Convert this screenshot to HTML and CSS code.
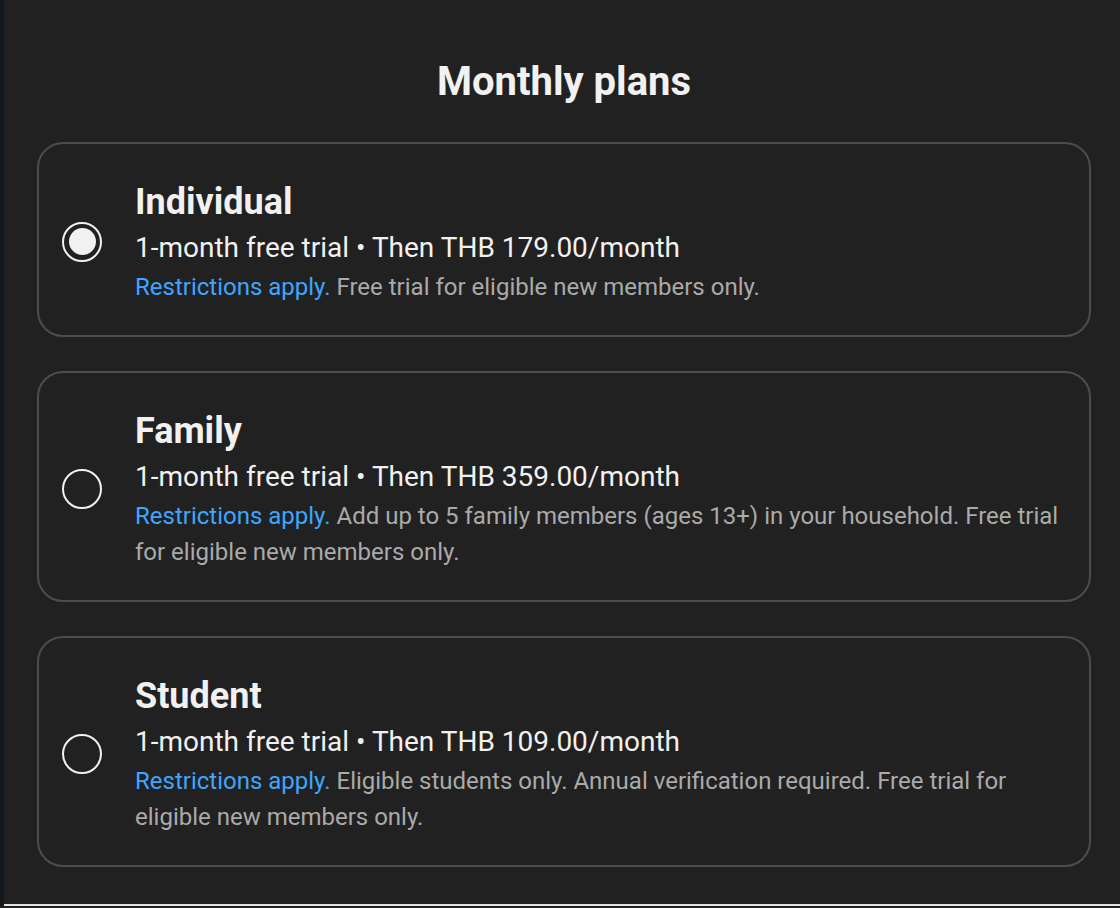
FILE: index.html
```html
<!DOCTYPE html>
<html lang="en">
<head>
<meta charset="utf-8">
<title>Monthly plans</title>
<link rel="stylesheet" href="styles.css">
</head>
<body>
<div class="page">
  <div class="edge"></div>
  <main class="content">
    <h1 class="title">Monthly plans</h1>
    <div class="plans">
      <label class="plan">
        <span class="radio checked"><span class="dot"></span></span>
        <span class="info">
          <span class="name">Individual</span>
          <span class="price">1-month free trial • Then THB 179.00/month</span>
          <span class="desc"><span class="link">Restrictions apply.</span> Free trial for eligible new members only.</span>
        </span>
      </label>
      <label class="plan">
        <span class="radio"></span>
        <span class="info">
          <span class="name">Family</span>
          <span class="price">1-month free trial • Then THB 359.00/month</span>
          <span class="desc"><span class="link">Restrictions apply.</span> Add up to 5 family members (ages 13+) in your household. Free trial for eligible new members only.</span>
        </span>
      </label>
      <label class="plan">
        <span class="radio"></span>
        <span class="info">
          <span class="name">Student</span>
          <span class="price">1-month free trial • Then THB 109.00/month</span>
          <span class="desc"><span class="link">Restrictions apply.</span> Eligible students only. Annual verification required. Free trial for eligible new members only.</span>
        </span>
      </label>
    </div>
  </main>
</div>
</body>
</html>
```

FILE: styles.css
```css
html, body {
  margin: 0;
  padding: 0;
  background: #212121;
  font-family: Roboto, "Liberation Sans", Arial, sans-serif;
  color: #f1f1f1;
}

.page {
  display: flex;
  height: 906px;
}

.edge {
  width: 4px;
  background: #12171d;
  flex: none;
}

.content {
  flex: 1;
  box-sizing: border-box;
  padding: 58px 29px 0 33px;
  border-bottom: 2px solid #e2e2e2;
}

.title {
  margin: 0 0 36px;
  text-align: center;
  font-size: 40px;
  line-height: 48px;
  font-weight: 700;
  color: #f1f1f1;
}

.plans {
  display: flex;
  flex-direction: column;
  gap: 34px;
}

.plan {
  display: flex;
  align-items: center;
  gap: 33px;
  border: 2px solid #4d4d4d;
  border-radius: 26px;
  padding: 34px 24px 30px 23px;
}

.radio {
  flex: none;
  box-sizing: border-box;
  width: 40px;
  height: 40px;
  border: 2px solid #f1f1f1;
  border-radius: 50%;
  display: flex;
  align-items: center;
  justify-content: center;
}

.dot {
  width: 27px;
  height: 27px;
  border-radius: 50%;
  background: #f1f1f1;
}

.info {
  display: flex;
  flex-direction: column;
  min-width: 0;
}

.name {
  font-size: 36px;
  line-height: 48px;
  font-weight: 700;
  color: #f1f1f1;
}

.price {
  font-size: 28px;
  line-height: 43px;
  color: #f1f1f1;
}

.desc {
  font-size: 24px;
  line-height: 36px;
  color: #aaaaaa;
}

.link {
  color: #3ea6ff;
}
```
